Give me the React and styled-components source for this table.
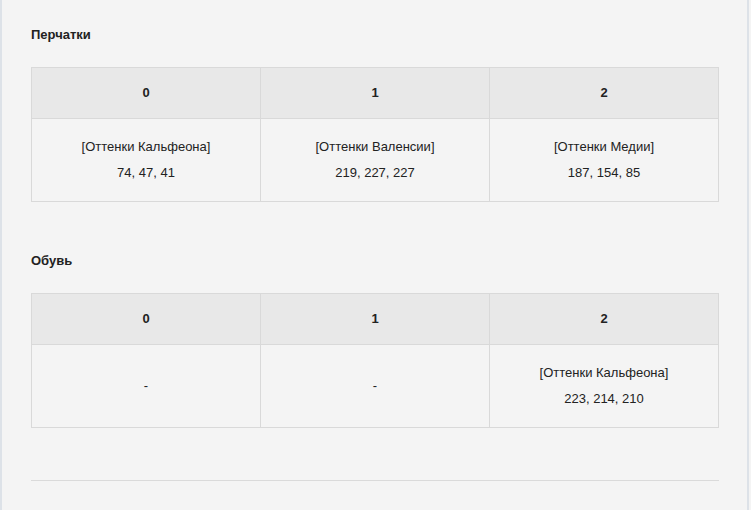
import styled, { createGlobalStyle } from 'styled-components';

const GlobalStyle = createGlobalStyle`
    html, body {
        margin: 0;
        padding: 0;
        background: #f4f4f4;
    }
    body {
        font-family: "Liberation Sans", Arial, sans-serif;
        color: #222;
    }
`;

const StyledFrame = styled.div`
    box-sizing: border-box;
    width: 749px;
    min-height: 510px;
    border-left: 2px solid #dde2e8;
    border-right: 2px solid #dde2e8;
    padding: 28px 29px 0 29px;
`;

const StyledSection = styled.section`
    margin-bottom: 52px;
`;

const StyledTitle = styled.h3`
    margin: 0 0 25px 0;
    font-size: 13px;
    line-height: 14px;
    font-weight: bold;
    color: #222;
`;

const StyledTable = styled.table`
    width: 688px;
    border-collapse: collapse;
    table-layout: fixed;
    font-size: 13px;
`;

const StyledHead = styled.th`
    height: 48px;
    padding: 0 0 2px 0;
    background: #e8e8e8;
    border: 1px solid #d9d9d9;
    font-weight: bold;
    text-align: center;
    vertical-align: middle;
`;

const StyledCell = styled.td`
    height: 80px;
    padding: 0 0 2px 0;
    border: 1px solid #d9d9d9;
    text-align: center;
    vertical-align: middle;
`;

const StyledLines = styled.div`
    display: flex;
    flex-direction: column;
    align-items: center;
    gap: 11px;
    line-height: 15px;
`;

const StyledRule = styled.hr`
    margin: 0;
    width: 688px;
    border: 0;
    border-top: 1px solid #dadada;
`;

const SECTIONS = [
    {
        TITLE: 'Перчатки',
        CELLS: [
            { NAME: '[Оттенки Кальфеона]', RGB: '74, 47, 41' },
            { NAME: '[Оттенки Валенсии]', RGB: '219, 227, 227' },
            { NAME: '[Оттенки Медии]', RGB: '187, 154, 85' },
        ],
    },
    {
        TITLE: 'Обувь',
        CELLS: [
            null,
            null,
            { NAME: '[Оттенки Кальфеона]', RGB: '223, 214, 210' },
        ],
    },
];

const DyeTable = ({ title, cells }) => (
    <StyledSection>
        <StyledTitle>{title}</StyledTitle>
        <StyledTable>
            <thead>
                <tr>
                    {cells.map((_, index) => <StyledHead key={index}>{index}</StyledHead>)}
                </tr>
            </thead>
            <tbody>
                <tr>
                    {cells.map((cell, index) =>
                        <StyledCell key={index}>
                            {cell ? (
                                <StyledLines>
                                    <span>{cell.NAME}</span>
                                    <span>{cell.RGB}</span>
                                </StyledLines>
                            ) : '-'}
                        </StyledCell>
                    )}
                </tr>
            </tbody>
        </StyledTable>
    </StyledSection>
);

const App = () => (
    <>
        <GlobalStyle />
        <StyledFrame>
            {SECTIONS.map(({ TITLE, CELLS }) => <DyeTable key={TITLE} title={TITLE} cells={CELLS} />)}
            <StyledRule />
        </StyledFrame>
    </>
);

export default App;
